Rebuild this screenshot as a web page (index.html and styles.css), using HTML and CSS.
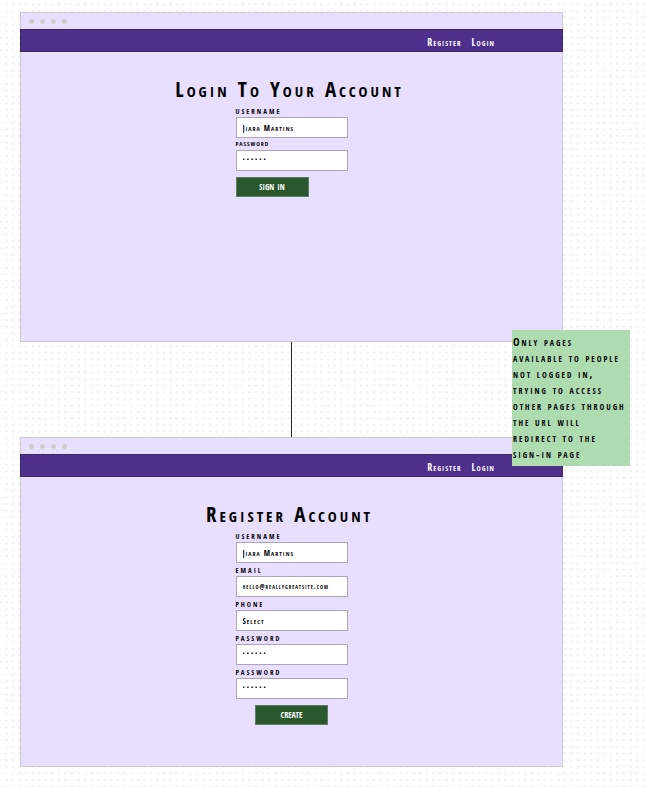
FILE: index.html
```html
<!DOCTYPE html>
<html lang="en">
<head>
<meta charset="utf-8">
<meta name="viewport" content="width=device-width, initial-scale=1">
<title>Login and registration wireframe</title>
<link rel="stylesheet" href="styles.css">
</head>
<body>
<svg class="grid" aria-hidden="true">
  <defs>
    <pattern id="plus" x="3" y="1.3" width="6.57" height="6.57" patternUnits="userSpaceOnUse">
      <path d="M2 3.3h2.6M3.3 2v2.6" stroke="#ededed" stroke-width="1"/>
    </pattern>
  </defs>
  <rect width="100%" height="100%" fill="url(#plus)"/>
</svg>
<main class="board">
  <section class="window">
    <div class="titlebar"><i class="dot"></i><i class="dot"></i><i class="dot"></i><i class="dot"></i></div>
    <nav class="nav"><a href="#register">Register</a><a href="#login">Login</a></nav>
    <div class="content" id="login">
      <h1>Login To Your Account</h1>
      <form class="form">
        <label for="login-user">username</label>
        <input id="login-user" type="text" value="Jiara Martins">
        <label class="minor" for="login-pass">password</label>
        <input id="login-pass" type="password" value="secret">
        <button type="button">sign in</button>
      </form>
    </div>
  </section>
  <div class="connector"></div>
  <section class="window">
    <div class="titlebar"><i class="dot"></i><i class="dot"></i><i class="dot"></i><i class="dot"></i></div>
    <nav class="nav"><a href="#register">Register</a><a href="#login">Login</a></nav>
    <div class="content" id="register">
      <h1>Register Account</h1>
      <form class="form">
        <label for="reg-user">username</label>
        <input id="reg-user" type="text" value="Jiara Martins">
        <label for="reg-email">email</label>
        <input id="reg-email" type="email" value="hello@reallygreatsite.com">
        <label for="reg-phone">phone</label>
        <select id="reg-phone"><option>Select</option></select>
        <label for="reg-pass">password</label>
        <input id="reg-pass" type="password" value="secret">
        <label for="reg-pass2">password</label>
        <input id="reg-pass2" type="password" value="secret">
        <button class="centered" type="button">create</button>
      </form>
    </div>
  </section>
  <aside class="note">Only pages<br>available to people<br>not logged in,<br>trying to access<br>other pages through<br>the url will<br>redirect to the<br>sign-in page</aside>
</main>
</body>
</html>
```
FILE: styles.css
```css
* { box-sizing: border-box; }

body {
  margin: 0;
  background: #fff;
  color: #000;
  font-family: "Liberation Sans Narrow", "Open Sans Condensed", "DejaVu Sans Condensed", sans-serif;
  font-weight: 700;
  font-variant-caps: small-caps;
}

.grid {
  position: absolute;
  inset: 0;
  width: 100%;
  height: 100%;
}

.board {
  position: relative;
  padding: 12px 82px 20px 20px;
}

.window {
  min-height: 330px;
  background: #e8dfff;
  border: 1px solid #cccbd0;
}

.titlebar {
  display: flex;
  align-items: center;
  gap: 6px;
  height: 16px;
  padding-left: 8px;
}

.dot {
  width: 5px;
  height: 5px;
  border-radius: 50%;
  background: #cccccf;
}

.nav {
  display: flex;
  align-items: center;
  justify-content: flex-end;
  gap: 10px;
  height: 23px;
  margin: 0 -1px;
  padding: 2px 67px 0 0;
  background: #4f2f8c;
  border: 1px solid #3b2860;
}

.nav a {
  color: #fff;
  font-size: 10px;
  line-height: 12px;
  letter-spacing: 1px;
  text-decoration: none;
}

.content {
  display: flex;
  flex-direction: column;
  align-items: center;
  padding: 23px 4px 32px 0;
}

h1 {
  margin: 0;
  font-size: 21px;
  line-height: 28px;
  font-weight: 700;
  letter-spacing: 3px;
}

.form {
  display: flex;
  flex-direction: column;
  width: 112px;
  margin-left: 4px;
  padding-top: 1px;
}

label {
  font-size: 10px;
  line-height: 13px;
  height: 13px;
  letter-spacing: 2px;
}

label.minor {
  height: 12px;
  font-size: 8px;
  line-height: 10px;
  letter-spacing: 1px;
}

input,
select {
  width: 100%;
  height: 21px;
  margin: 0;
  padding: 0 6px;
  appearance: none;
  background: #fff;
  border: 1px solid #aaa6b7;
  border-radius: 0;
  color: #000;
  font: inherit;
  font-size: 8px;
  letter-spacing: 1px;
}

input[type="email"] { font-size: 7px; }

input[type="password"] {
  padding-bottom: 3px;
  font-size: 6px;
  letter-spacing: 2px;
}

button {
  width: 73px;
  height: 20px;
  margin: 6px 0 0;
  padding: 0 0 3px;
  background: #29592c;
  border: 1px solid #5b7d63;
  color: #fff;
  font: inherit;
  font-size: 12px;
  line-height: 14px;
}

button.centered { align-self: center; }

.connector {
  width: 1px;
  height: 95px;
  margin: 0 auto;
  background: #222;
}

.note {
  position: absolute;
  top: 330px;
  right: 15px;
  width: 118px;
  padding: 4px 1px;
  background: #afdbb1;
  font-size: 11px;
  line-height: 16px;
  letter-spacing: 2px;
  white-space: nowrap;
}
```
